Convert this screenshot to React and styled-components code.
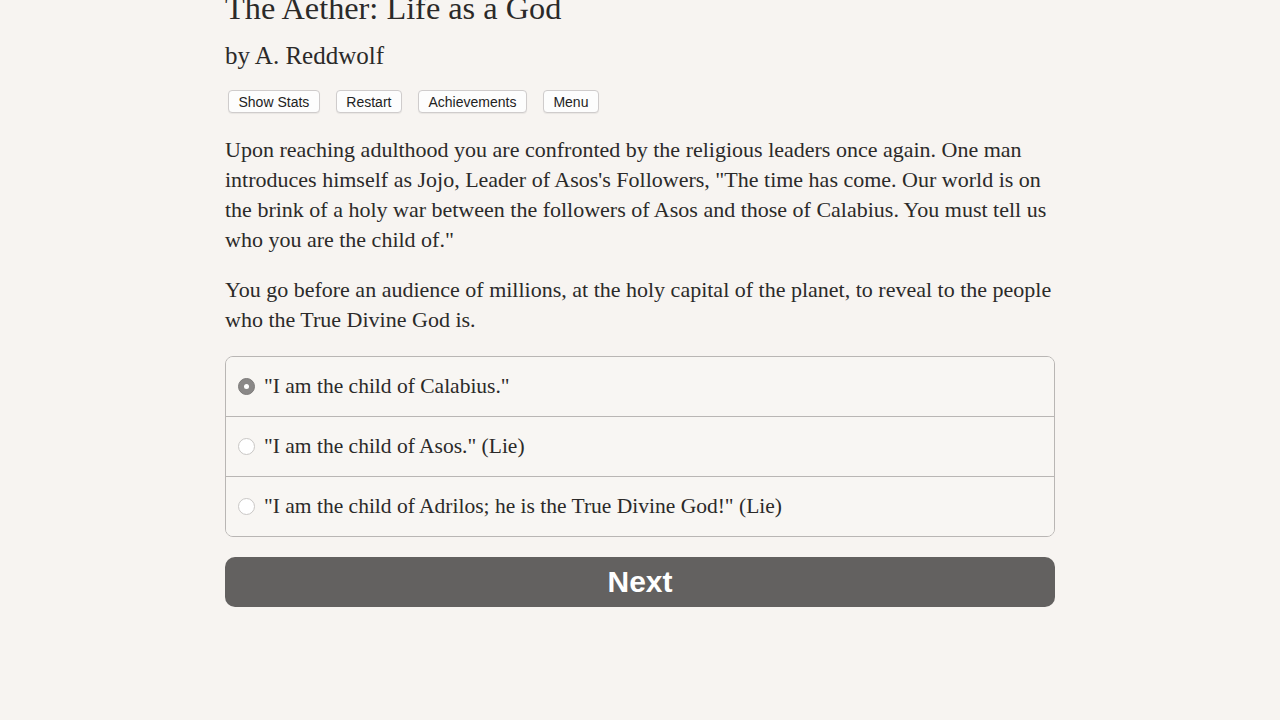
import React from 'react';
import styled, {createGlobalStyle} from 'styled-components';

const GlobalStyle = createGlobalStyle`
  html, body {
    margin: 0;
    padding: 0;
    background: #f7f4f1;
    overflow: hidden;
  }
`;

const Page = styled.div`
  width: 830px;
  margin: -14px auto 0 225px;
  font-family: "Liberation Serif", "Times New Roman", serif;
  color: #2b2a29;
`;

const Title = styled.h1`
  margin: 0;
  font-weight: normal;
  font-size: 32.3px;
  line-height: 44px;
`;

const Author = styled.h2`
  margin: 10px 0 0;
  font-weight: normal;
  font-size: 25px;
  line-height: 32px;
`;

const ButtonBar = styled.div`
  display: flex;
  gap: 16px;
  margin: 18px 0 0 3px;
  padding-bottom: 2px;
`;

const SmallButton = styled.button`
  font-family: "Liberation Sans", Arial, sans-serif;
  font-size: 14px;
  color: #222;
  background: #fdfdfd;
  border: 1px solid #cfcccc;
  border-radius: 4px;
  height: 23px;
  padding: 0 9.5px;
  box-shadow: 0 1px 1px rgba(0,0,0,0.06);
`;

const Paragraph = styled.p`
  margin: 20px 0 0;
  font-size: 22px;
  line-height: 30px;
  white-space: nowrap;
`;

const ChoiceList = styled.div`
  margin-top: 21px;
  border: 1px solid #b9b6b4;
  border-radius: 8px;
  overflow: hidden;
`;

const Choice = styled.label`
  display: flex;
  align-items: center;
  height: 59px;
  padding-left: 12px;
  font-size: 21.5px;
  border-top: ${p => (p.first ? 'none' : '1px solid #b9b6b4')};
  background: #f8f6f3;
`;

const Radio = styled.span`
  width: 17px;
  height: 17px;
  border-radius: 50%;
  margin-right: 9px;
  box-sizing: border-box;
  flex: none;
  background: ${p => (p.checked ? '#8a8887' : '#ffffff')};
  border: 1px solid ${p => (p.checked ? '#7d7b7a' : '#c9c7c5')};
  display: flex;
  align-items: center;
  justify-content: center;
  &::after {
    content: '';
    width: 5px;
    height: 5px;
    border-radius: 50%;
    background: ${p => (p.checked ? '#ffffff' : 'transparent')};
  }
`;

const NextButton = styled.button`
  display: block;
  width: 100%;
  height: 50px;
  margin-top: 20px;
  border: none;
  border-radius: 10px;
  background: #636160;
  color: #ffffff;
  font-family: "Liberation Sans", Arial, sans-serif;
  font-weight: bold;
  font-size: 30px;
`;

const choices = [
  '"I am the child of Calabius."',
  '"I am the child of Asos." (Lie)',
  '"I am the child of Adrilos; he is the True Divine God!" (Lie)',
];

export default function App() {
  return (
    <>
      <GlobalStyle />
      <Page>
        <Title>The Aether: Life as a God</Title>
        <Author>by A. Reddwolf</Author>
        <ButtonBar>
          <SmallButton>Show Stats</SmallButton>
          <SmallButton>Restart</SmallButton>
          <SmallButton>Achievements</SmallButton>
          <SmallButton>Menu</SmallButton>
        </ButtonBar>
        <Paragraph>
          Upon reaching adulthood you are confronted by the religious leaders once again. One man<br />
          introduces himself as Jojo, Leader of Asos's Followers, "The time has come. Our world is on<br />
          the brink of a holy war between the followers of Asos and those of Calabius. You must tell us<br />
          who you are the child of."
        </Paragraph>
        <Paragraph>
          You go before an audience of millions, at the holy capital of the planet, to reveal to the people<br />
          who the True Divine God is.
        </Paragraph>
        <ChoiceList>
          {choices.map((c, i) => (
            <Choice key={i} first={i === 0}>
              <Radio checked={i === 0} />
              {c}
            </Choice>
          ))}
        </ChoiceList>
        <NextButton>Next</NextButton>
      </Page>
    </>
  );
}
